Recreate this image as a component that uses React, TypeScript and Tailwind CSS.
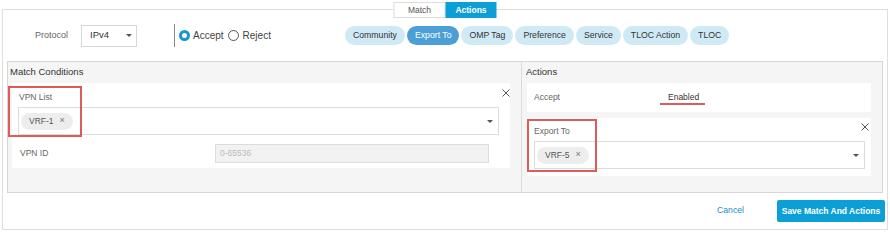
import React from 'react'

const pills = ['Community', 'Export To', 'OMP Tag', 'Preference', 'Service', 'TLOC Action', 'TLOC']

function Chip({ label }: { label: string }) {
  return (
    <span className="inline-flex items-center h-[17px] px-[8px] gap-[6px] rounded-full bg-[#ededed] text-[8.5px] text-[#555]">
      {label}
      <span className="text-[9px] text-[#777]">×</span>
    </span>
  )
}

function Caret() {
  return <span className="w-0 h-0 border-l-[3px] border-r-[3px] border-t-[3px] border-l-transparent border-r-transparent border-t-[#555]" />
}

function Close() {
  return (
    <svg width="8" height="8" viewBox="0 0 8 8" className="absolute">
      <path d="M0.5 0.5 L7.5 7.5 M7.5 0.5 L0.5 7.5" stroke="#555" strokeWidth="1" />
    </svg>
  )
}

export default function App() {
  return (
    <div className="w-[890px] h-[233px] bg-white pt-[9px] pl-[2px] font-['Liberation_Sans',Arial,sans-serif] relative overflow-hidden">
      <div className="relative w-[886px] h-[221px] border border-[#dedede]">
        {/* tabs */}
        <div className="absolute top-[-8px] left-1/2 -translate-x-1/2 flex h-[16px] text-[8.5px]">
          <div className="w-[52px] flex items-center justify-center bg-white border border-[#dcdcdc] text-[#555]">Match</div>
          <div className="w-[51px] flex items-center justify-center bg-[#0c9fd6] text-white font-bold">Actions</div>
        </div>

        {/* top row */}
        <div className="h-[51px] flex items-center pl-[32px]">
          <span className="text-[9px] text-[#666] w-[46px]">Protocol</span>
          <div className="w-[56px] h-[22px] border border-[#d6d6d6] flex items-center justify-between pl-[8px] pr-[4px] text-[9.5px] text-[#333]">
            IPv4
            <Caret />
          </div>
          <div className="ml-[37px] w-[1px] h-[23px] bg-[#888]" />
          <div className="ml-[4px] w-[166px] flex items-center text-[10px] text-[#444]">
            <span className="w-[11px] h-[11px] rounded-full border-[3px] border-[#1a96cf] bg-white" />
            <span className="ml-[3px]">Accept</span>
            <span className="ml-[4px] w-[11px] h-[11px] rounded-full border border-[#555] bg-white" />
            <span className="ml-[4px]">Reject</span>
          </div>
          <div className="flex items-center gap-[2px]">
            {pills.map((p) => (
              <span
                key={p}
                className={`h-[19px] px-[8px] rounded-full flex items-center text-[8.7px] ${
                  p === 'Export To' ? 'bg-[#4b9fd6] text-white' : 'bg-[#cfe9f5] text-[#333]'
                }`}
              >
                {p}
              </span>
            ))}
          </div>
        </div>

        {/* gray panel */}
        <div className="mx-[4px] h-[132px] border border-[#d6d6d6] bg-[#f5f5f5] flex">
          <div className="w-[514px] border-r border-[#dcdcdc] flex flex-col">
            <div className="h-[21px] flex items-center pl-[2px] text-[9.5px] text-[#333]">Match Conditions</div>
            <div className="ml-[4px] mr-[11px] h-[85px] bg-white relative px-[6px]">
              <div className="h-[24px] flex items-center text-[8.5px] text-[#666] pl-[1px] pt-[4px]">VPN List</div>
              <span className="absolute right-[0px] top-[6px] w-[8px] h-[8px]"><Close /></span>
              <div className="h-[28px] mr-[5px] border border-[#dcdcdc] flex items-center justify-between pl-[2px] pr-[5px]">
                <Chip label="VRF-1" />
                <Caret />
              </div>
              <div className="mt-[9px] flex items-center">
                <span className="w-[197px] pl-[2px] text-[8.5px] text-[#666]">VPN ID</span>
                <div className="w-[274px] h-[19px] border border-[#dcdcdc] bg-[#f2f2f2] flex items-center pl-[4px] text-[8.5px] text-[#bbb]">0-65536</div>
              </div>
            </div>
          </div>
          <div className="flex-1 flex flex-col">
            <div className="h-[21px] flex items-center pl-[4px] text-[9.5px] text-[#333]">Actions</div>
            <div className="ml-[5px] mr-[11px] h-[29px] bg-white flex items-center px-[7px] text-[8.5px]">
              <span className="w-[134px] text-[#666]">Accept</span>
              <span className="text-[#333]">Enabled</span>
            </div>
            <div className="ml-[5px] mr-[11px] mt-[6px] h-[58px] bg-white relative px-[7px]">
              <div className="h-[23px] flex items-end pb-[3px] text-[8.5px] text-[#666]">Export To</div>
              <span className="absolute right-[2px] top-[5px] w-[8px] h-[8px]"><Close /></span>
              <div className="h-[28px] mr-[-1px] border border-[#dcdcdc] flex items-center justify-between pl-[2px] pr-[5px]">
                <Chip label="VRF-5" />
                <Caret />
              </div>
            </div>
          </div>
        </div>

        {/* footer */}
        <div className="h-[36px] flex items-center justify-end pr-[2px] gap-[33px]">
          <span className="text-[8.7px] text-[#2a8fc6]">Cancel</span>
          <button className="w-[108px] h-[22px] rounded-[2px] bg-[#0c9fd6] text-white text-[8.5px] font-bold">Save Match And Actions</button>
        </div>
      </div>

      {/* annotations */}
      <div className="absolute left-[8px] top-[86px] w-[74px] h-[51px] border-2 border-[#e15a5a]" />
      <div className="absolute left-[527px] top-[119px] w-[70px] h-[53px] border-2 border-[#e15a5a]" />
      <div className="absolute left-[660px] top-[103px] w-[45px] h-[2px] bg-[#e15a5a]" />
    </div>
  )
}
